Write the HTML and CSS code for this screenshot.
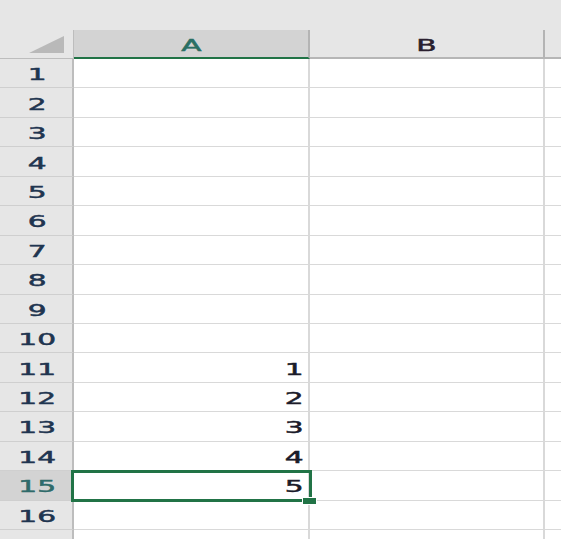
FILE: index.html
```html
<!DOCTYPE html>
<html>
<head>
<meta charset="utf-8">
<link rel="stylesheet" href="styles.css">
</head>
<body>
<div class="band"></div>
<div class="sheet">
  <div class="corner"><span class="tri"></span></div>
  <div class="colhead sel"><span class="t">A</span></div>
  <div class="colhead"><span class="t dark">B</span></div>
  <div class="colhead last"></div>

  <div class="rowhead"><span class="t">1</span></div><div class="cell"></div><div class="cell"></div><div class="cell last"></div>
  <div class="rowhead"><span class="t">2</span></div><div class="cell"></div><div class="cell"></div><div class="cell last"></div>
  <div class="rowhead"><span class="t">3</span></div><div class="cell"></div><div class="cell"></div><div class="cell last"></div>
  <div class="rowhead"><span class="t">4</span></div><div class="cell"></div><div class="cell"></div><div class="cell last"></div>
  <div class="rowhead"><span class="t">5</span></div><div class="cell"></div><div class="cell"></div><div class="cell last"></div>
  <div class="rowhead"><span class="t">6</span></div><div class="cell"></div><div class="cell"></div><div class="cell last"></div>
  <div class="rowhead"><span class="t">7</span></div><div class="cell"></div><div class="cell"></div><div class="cell last"></div>
  <div class="rowhead"><span class="t">8</span></div><div class="cell"></div><div class="cell"></div><div class="cell last"></div>
  <div class="rowhead"><span class="t">9</span></div><div class="cell"></div><div class="cell"></div><div class="cell last"></div>
  <div class="rowhead"><span class="t">10</span></div><div class="cell"></div><div class="cell"></div><div class="cell last"></div>
  <div class="rowhead"><span class="t">11</span></div><div class="cell num"><span class="t v">1</span></div><div class="cell"></div><div class="cell last"></div>
  <div class="rowhead"><span class="t">12</span></div><div class="cell num"><span class="t v">2</span></div><div class="cell"></div><div class="cell last"></div>
  <div class="rowhead"><span class="t">13</span></div><div class="cell num"><span class="t v">3</span></div><div class="cell"></div><div class="cell last"></div>
  <div class="rowhead"><span class="t">14</span></div><div class="cell num"><span class="t v">4</span></div><div class="cell"></div><div class="cell last"></div>
  <div class="rowhead selrow"><span class="t">15</span></div><div class="cell num active"><span class="t v">5</span><span class="handle"></span></div><div class="cell"></div><div class="cell last"></div>
  <div class="rowhead"><span class="t">16</span></div><div class="cell"></div><div class="cell"></div><div class="cell last"></div>
  <div class="rowhead"></div><div class="cell"></div><div class="cell"></div><div class="cell last"></div>
</div>
</body>
</html>
```

FILE: styles.css
```css
html, body {
  margin: 0;
  padding: 0;
  background: #e6e6e6;
  overflow: hidden;
}
body {
  width: 561px;
  height: 539px;
  font-family: "DejaVu Sans", "Liberation Sans", sans-serif;
}
.band {
  height: 30px;
  background: #e6e6e6;
}
.sheet {
  display: grid;
  grid-template-columns: 74px 236px 235px 1fr;
  grid-template-rows: 29px repeat(17, 29.45px);
  background: #ffffff;
}
.sheet > div {
  box-sizing: border-box;
  display: flex;
  align-items: center;
  justify-content: center;
  overflow: visible;
  padding-top: 4px;
}
.corner {
  background: #e6e6e6;
  border-right: 1px solid #bdbdbd;
  border-bottom: 1px solid #bdbdbd;
  position: relative;
}
.tri {
  position: absolute;
  right: 9px;
  bottom: 5px;
  width: 0;
  height: 0;
  border-left: 35px solid transparent;
  border-bottom: 17px solid #b9b9b9;
}
.colhead {
  background: #e6e6e6;
  border-right: 2px solid #b4b4b4;
  border-bottom: 2px solid #b6b6b6;
}
.colhead.sel {
  background: #d3d3d3;
  border-bottom: 2px solid #217346;
}
.colhead.last {
  border-right: none;
}
.t {
  display: inline-block;
  font-size: 16px;
  line-height: 16px;
  color: #1e2a3a;
  transform: scaleX(1.85);
  font-weight: 400;
  -webkit-text-stroke: 0.5px currentColor;
}
.colhead.sel .t {
  color: #2a6f63;
}
.t.dark {
  color: #2a1f2f;
}
.rowhead {
  background: #e6e6e6;
  border-right: 2px solid #bdbdbd;
  border-bottom: 1px solid #cfcfcf;
  padding-left: 3px;
}
.rowhead .t {
  color: #1f3550;
}
.rowhead.selrow {
  background: #d3d3d3;
}
.rowhead.selrow .t {
  color: #2f6b6a;
}
.cell {
  border-right: 2px solid #d9d9d9;
  border-bottom: 1px solid #d9d9d9;
}
.cell.last {
  border-right: none;
}
.cell.num {
  justify-content: flex-end;
  padding-right: 9px;
}
.t.v {
  color: #1b1b2a;
}
.cell.active {
  position: relative;
}
.cell.active::after {
  content: "";
  position: absolute;
  left: -3px;
  top: -1px;
  right: -4px;
  bottom: -2px;
  border: 3px solid #217346;
  box-sizing: border-box;
  pointer-events: none;
}
.handle {
  position: absolute;
  right: -9px;
  bottom: -5px;
  width: 13px;
  height: 6px;
  background: #217346;
  border: 1px solid #ffffff;
  z-index: 2;
}
```
